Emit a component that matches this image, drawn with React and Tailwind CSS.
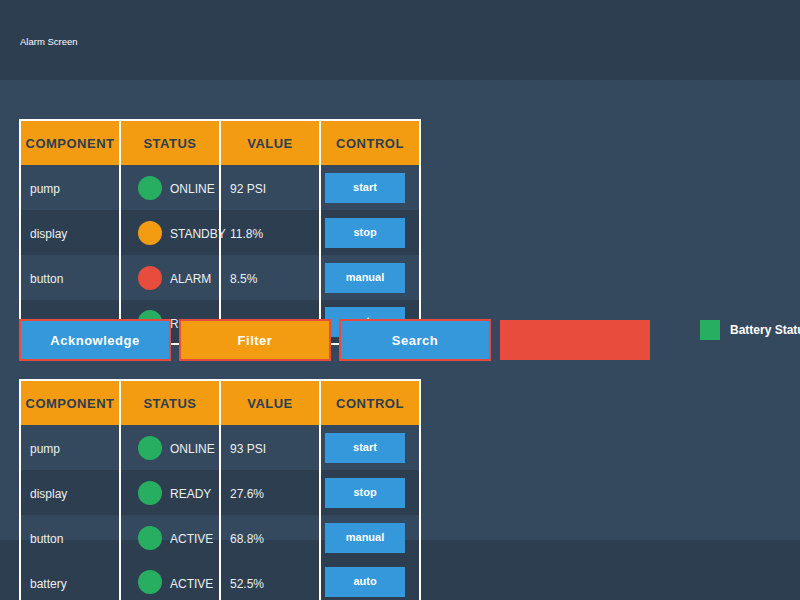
import React from 'react';

const HEADERS = ['COMPONENT', 'STATUS', 'VALUE', 'CONTROL'];

const DOT = {
  green: 'bg-[#27ae60]',
  orange: 'bg-[#f39c12]',
  red: 'bg-[#e74c3c]',
};

const TOP_ROWS = [
  { name: 'pump', dot: 'green', status: 'ONLINE', value: '92 PSI', action: 'start' },
  { name: 'display', dot: 'orange', status: 'STANDBY', value: '11.8%', action: 'stop' },
  { name: 'button', dot: 'red', status: 'ALARM', value: '8.5%', action: 'manual' },
  { name: 'sensor', dot: 'green', status: 'READY', value: '41.2%', action: 'auto' },
];

const BOTTOM_ROWS = [
  { name: 'pump', dot: 'green', status: 'ONLINE', value: '93 PSI', action: 'start' },
  { name: 'display', dot: 'green', status: 'READY', value: '27.6%', action: 'stop' },
  { name: 'button', dot: 'green', status: 'ACTIVE', value: '68.8%', action: 'manual' },
  { name: 'battery', dot: 'green', status: 'ACTIVE', value: '52.5%', action: 'auto' },
];

function StatusTable({ rows }) {
  return (
    <div className="-ml-px w-[402px] border-2 border-white">
      {/* header */}
      <div className="flex h-11 bg-[#f39c12] text-[13px] font-bold tracking-[0.5px] text-[#2c3e50]">
        {HEADERS.map((h, i) => (
          <div
            key={h}
            className={
              i < 3
                ? 'flex w-[100px] items-center justify-center whitespace-nowrap border-r-2 border-white pt-[2px]'
                : 'flex flex-1 items-center justify-center whitespace-nowrap pt-[2px]'
            }
          >
            {h}
          </div>
        ))}
      </div>

      {rows.map((row, idx) => {
        const last = idx === rows.length - 1;
        const textPad = last ? 'pt-[4px]' : 'pt-[2px]';
        return (
          <div
            key={idx}
            className={[
              'flex text-[12px] text-[#ecf0f1]',
              idx % 2 === 1 ? 'bg-[#2c3e50]' : '',
              last ? 'h-[43px]' : 'h-[45px]',
            ].join(' ')}
          >
            <div className="flex w-[100px] items-center whitespace-nowrap border-r-2 border-white pl-[9px]">
              <span className={textPad}>{row.name}</span>
            </div>
            <div className="flex w-[100px] items-center whitespace-nowrap border-r-2 border-white pl-[17px]">
              <span className={`h-6 w-6 shrink-0 rounded-full ${DOT[row.dot]}`} />
              <span className={`ml-2 ${textPad}`}>{row.status}</span>
            </div>
            <div className="flex w-[100px] items-center whitespace-nowrap border-r-2 border-white pl-[9px]">
              <span className={textPad}>{row.value}</span>
            </div>
            <div className="flex flex-1 items-center pl-1">
              <button className="h-[30px] w-20 bg-[#3498db] text-[11px] font-bold text-white">
                {row.action}
              </button>
            </div>
          </div>
        );
      })}
    </div>
  );
}

export default function App() {
  return (
    <div className="flex h-screen w-full flex-col overflow-hidden bg-[#34495e] font-['Liberation_Sans',Arial,sans-serif]">
      <header className="flex h-20 shrink-0 items-center bg-[#2c3e50] px-5 pt-[4px] text-[9.5px] text-white">
        Alarm Screen
      </header>

      <main className="relative z-10 min-h-0 flex-1 px-5 pt-10">
        {/* top table keeps a fixed slot; its last row runs under the button bar */}
        <div className="flex h-[200px] flex-col">
          <div className="-mt-px">
            <StatusTable rows={TOP_ROWS} />
          </div>
        </div>

        <div className="flex h-10 items-start gap-[10px] whitespace-nowrap text-[13px] font-bold tracking-[0.5px] text-white">
          <button className="h-10 w-[150px] shrink-0 bg-[#3498db] pt-[2px] outline-2 -outline-offset-1 outline-[#e74c3c]">
            Acknowledge
          </button>
          <button className="h-10 w-[150px] shrink-0 bg-[#f39c12] pt-[2px] outline-2 -outline-offset-1 outline-[#e74c3c]">
            Filter
          </button>
          <button className="h-10 w-[150px] shrink-0 bg-[#3498db] pt-[2px] outline-2 -outline-offset-1 outline-[#e74c3c]">
            Search
          </button>
          <div className="h-10 w-[150px] shrink-0 bg-[#e74c3c]" />
          <div className="ml-10 flex shrink-0 items-center gap-[10px] text-[12px] tracking-normal">
            <span className="h-5 w-5 bg-[#27ae60]" />
            <span>Battery Status</span>
          </div>
        </div>

        <div className="mt-[19px]">
          <StatusTable rows={BOTTOM_ROWS} />
        </div>
      </main>

      <footer className="h-[60px] shrink-0 bg-[#2c3e50]" />
    </div>
  );
}
